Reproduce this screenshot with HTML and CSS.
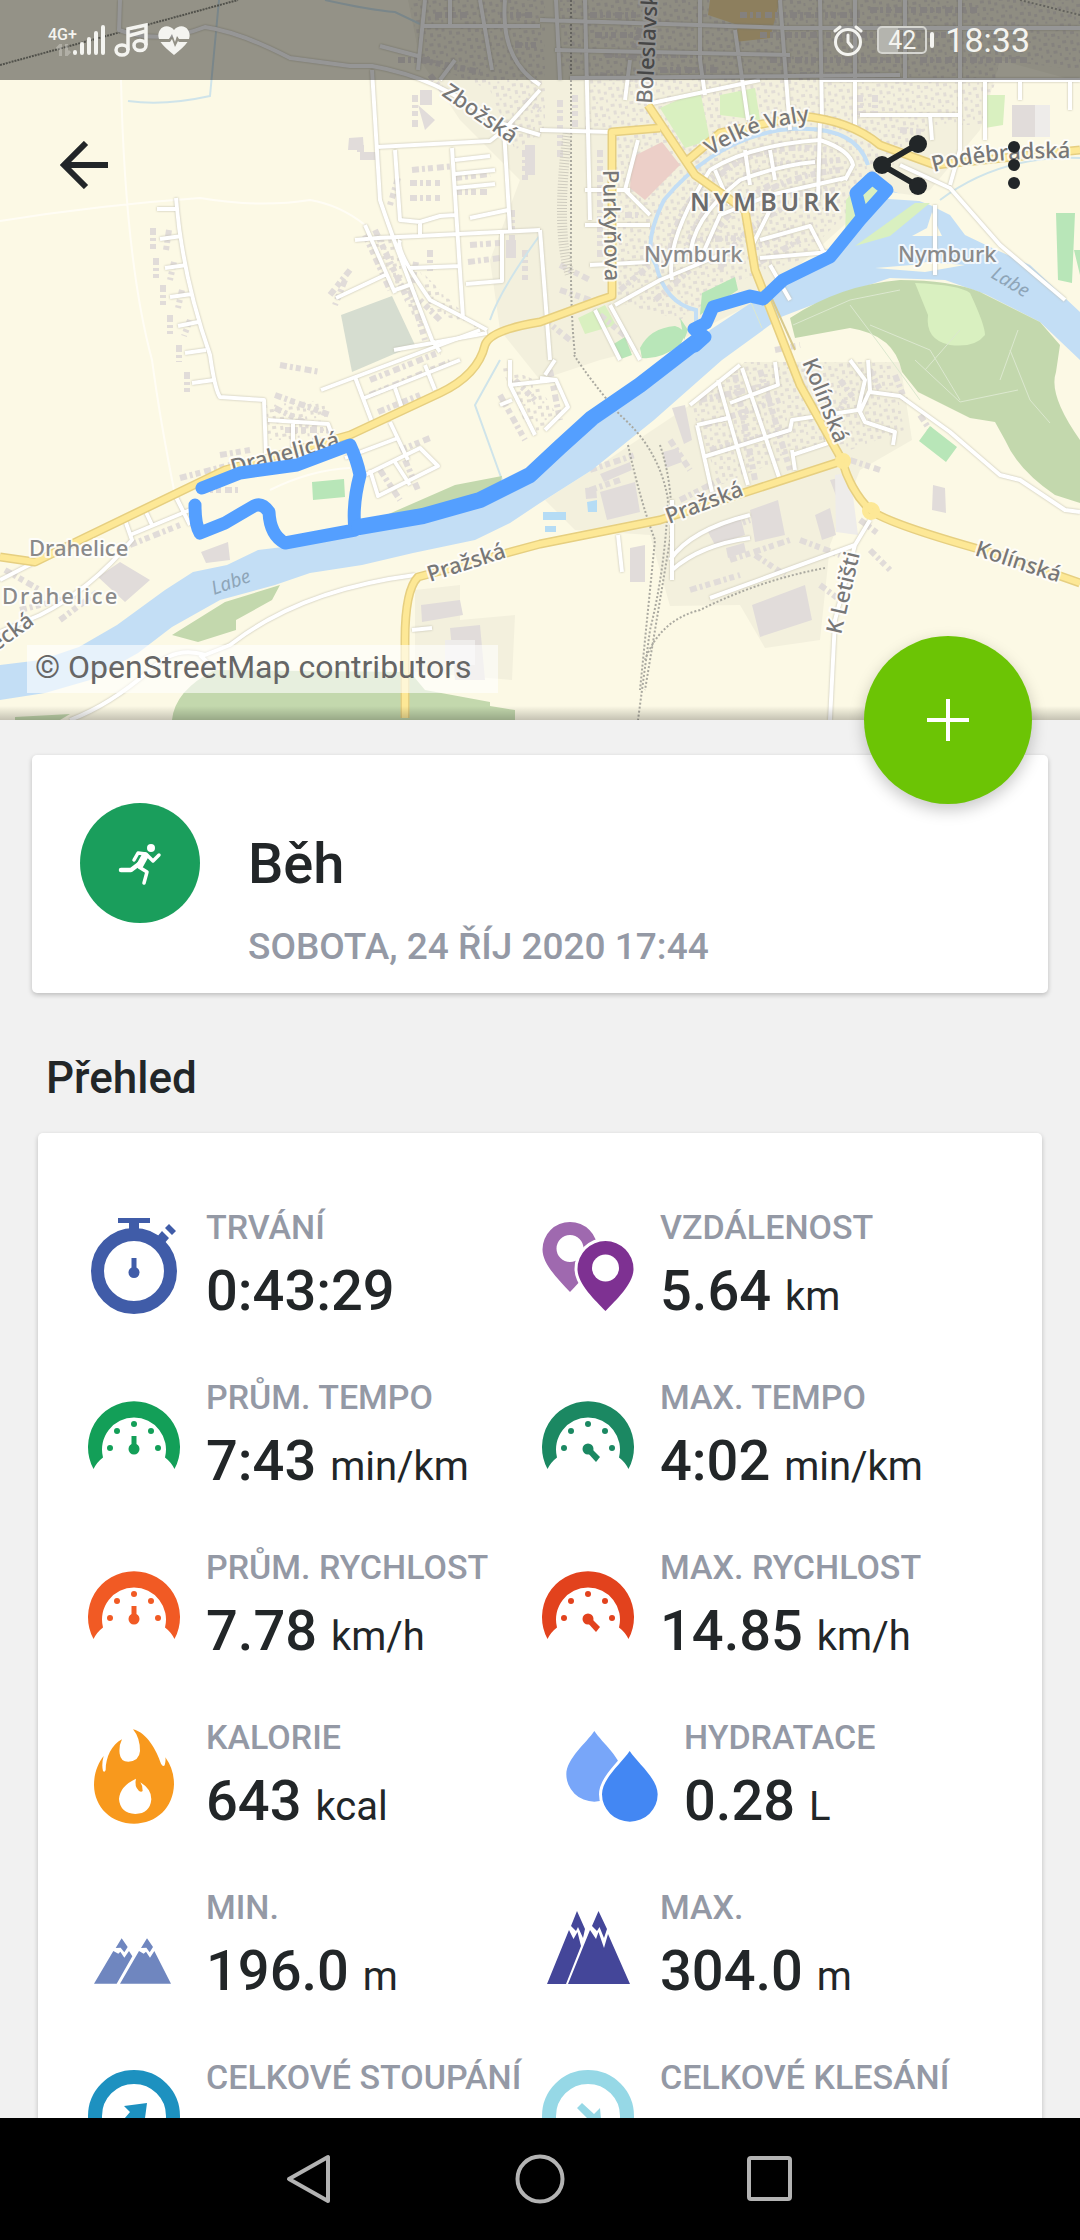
FILE: index.html
```html
<!DOCTYPE html>
<html lang="cs">
<head>
    <meta charset="UTF-8">
    <meta name="viewport" content="width=device-width, initial-scale=1.0">
    <title>Běh</title>
    <link rel="stylesheet" href="styles.css">
</head>
<body>
    <!-- shared icons -->
    <svg class="sprite" aria-hidden="true">
        <symbol id="gauge" viewBox="0 0 96 96">
            <path d="M7.500 81A46 46 0 1 1 88.500 81Q85 74 79 69.500A32 32 0 1 0 17 69.500Q11 74 7.500 81Z"/>
            <circle cx="24" cy="60" r="3"/><circle cx="31" cy="43" r="3"/><circle cx="48" cy="36" r="3"/>
            <circle cx="65" cy="43" r="3"/><circle cx="72" cy="60" r="3"/><circle cx="48" cy="61" r="5.500"/>
        </symbol>
    </svg>

    <main class="screen">
        <section class="map">
            <svg class="map-canvas" viewBox="0 0 1080 720" preserveAspectRatio="xMidYMid slice" role="img" aria-label="Mapa trasy">
                <defs>
                    <pattern id="specks" width="19" height="17" patternUnits="userSpaceOnUse" patternTransform="rotate(-8)">
                        <path fill="#e2ddd6" d="M1 1H5V4H1ZM9 2H12V6H9ZM15 5H18V8H15ZM3 8H6V12H3ZM10 10H14V13H10ZM6 14H8V16H6ZM16 13H18V16H16Z"/>
                    </pattern>
                </defs>
                <rect class="land" width="1080" height="720"/>

                <!-- built-up areas -->
                <path class="urban" d="M408 0H1080V82L1000 60 980 130 930 190 850 220 760 300 680 340 600 360 540 380 500 330 490 260 520 180 460 120 420 60Z"/>
                <path class="urban" d="M690 405L745 362 900 362 912 440 860 470 830 545 820 640 765 648 740 605 670 606 650 535 575 530 545 500 600 465Z"/>
                <path class="urban" d="M415 590L460 585V620L515 615 512 680 415 672Z"/>
                <path fill="url(#specks)" d="M410 0H1080V70L1000 60 985 125H930L870 190 800 260 740 280 680 320 610 300V130H585V70H560V0H545V130L515 150 490 90 420 60ZM372 240L395 235 430 330 415 320ZM420 270L450 300 480 330 430 310ZM690 405L745 362H890L905 430 850 450 830 440 720 485ZM265 405L325 400 330 440H268ZM500 365L535 380 560 420 530 435Z"/>
                <path class="park" d="M660 108L700 90 710 140 685 148ZM720 95L755 88 760 120 720 115ZM985 95L1005 95 1003 125 985 128Z"/>
                <path class="park" d="M578 318L605 305 616 325 585 334ZM846 200L870 172 880 195 850 226 845 240Z"/>
                <path class="hospital" d="M632 157L662 142 680 165 645 200 630 188Z"/>
                <path class="school" d="M710 0H780L770 38 735 42 738 25 708 15Z"/>
                <path class="site" d="M341 315L392 296 415 345 352 372Z"/>

                <!-- buildings -->
                <g class="houses">
                    <path d="M153 228V250M156 258V278M163 285V305M170 315V334M179 345V362M187 372V392M169 230L166 250M174 262L170 280M182 290L178 308M190 320L184 336"/>
                    <path d="M365 235L390 290M375 230L408 300M410 290L425 340M398 178L390 205M412 170L455 166M410 183H440M410 198H440M455 178L490 174M455 192H490M470 245L500 243M468 262L500 258M416 262L412 285M430 250V275M440 320L420 300M350 270L330 295M345 280L335 305"/>
                    <path d="M420 60L480 72M430 75L450 100M415 95V130M525 150V180M512 210V240M525 250V280M398 60H430M435 15H470M500 15H535M515 45H540M525 100L540 110"/>
                    <path d="M275 395L330 415M275 408L320 430M285 430H330M220 455L250 450M180 478L230 465M280 365L320 372M370 380L440 352M370 395L450 362M378 412L420 395M400 450L430 438M380 470L400 500M405 460L418 490M500 395L525 440M515 380L535 400"/>
                    <path d="M5 570L40 590M20 610L80 595M60 620L100 590M130 545L180 525M200 490H240"/>
                    <path d="M590 15H640M595 35H650M605 55H700M660 70H720M740 15H860M760 35H900M770 60H900M800 75H880M870 10H980M900 35H1000M920 60H1030M640 28L630 60"/>
                    <path d="M860 95V115M875 95V115M900 130L925 132M560 100V160M575 95V130M600 150V260M625 215H640M600 75L640 80"/>
                    <path d="M670 250Q680 190 740 160M685 255Q700 195 760 170M700 262Q715 215 770 185M720 270Q735 230 790 205M720 175Q760 140 830 150M750 200Q790 175 840 170M750 250L790 230M760 262L800 240M690 240L740 238M790 195L835 190M770 165L840 160"/>
                    <path d="M560 265L590 280M560 290L590 300M545 320L570 340M620 290L650 265M655 300L690 270M600 315L630 340M550 370L560 420M775 350L800 345"/>
                    <path d="M700 400L770 385M705 425L780 400M710 450L790 430M735 375L755 480M760 370L790 470M800 380L820 420M825 440L845 400M840 380L855 400M870 370L880 390M895 375L905 400M850 460L880 470M920 415L930 430"/>
                    <path d="M590 470L635 455M590 490L620 480M670 440L690 470M680 500L720 480M710 535L750 520M730 560L790 540M755 555L785 575M800 540L840 555M860 520L880 535M870 550L890 570M690 590L740 575M820 585L840 600"/>
                </g>
                <g class="buildings">
                    <path d="M600 492L635 482 640 512 607 520ZM672 408L685 405 692 440 684 444ZM707 530L740 515 745 535 715 545ZM750 510L778 500 785 535 755 542ZM752 605L805 585 812 620 760 637ZM815 515L830 508 836 535 822 540Z"/>
                    <path d="M630 548L645 545V582H630ZM830 480L842 477 848 497 838 501ZM933 485L945 488 946 513 932 510ZM201 552L228 542 230 560 206 563ZM98 577L120 562 150 580 125 602ZM421 605L460 600 463 615 422 622ZM450 628L480 625 485 680 455 680ZM1012 105L1035 105V137H1012ZM420 90H432V105H420ZM418 105L425 130 435 120ZM525 145H535V175H525ZM506 240H516V258H506Z"/>
                    <path d="M349 138L363 137 364 152H377V160H360V150H348ZM357 145H364V152H357ZM585 488L596 487 597 498 586 499ZM663 452L678 448 682 462 666 468ZM600 474L630 462 632 470 604 482ZM726 548L744 543 746 552 728 558Z"/>
                </g>
                <path class="plot" d="M835 475L850 472 858 535 836 532ZM1035 105H1050V137H1035ZM445 640H475V665H445Z"/>

                <!-- water -->
                <path class="stream" d="M128 101Q165 106 210 96L219 0M325 0Q370 10 395 12L420 24M540 235Q500 290 490 320M500 360L475 405 502 480M1080 158Q1000 155 940 200M985 395Q1040 430 1060 440"/>
                <path class="moat" d="M696 325V310Q665 303 656 265Q642 245 664 200Q712 142 780 130Q855 122 868 165"/>
                <path class="water" d="M0 665L41 660 79 647 117 625 165 590 193 572 227 565 258 550 300 545 355 530 415 518 492 492 540 465 575 440 685 360 710 330 760 297 830 255 865 215 890 190 930 205 950 215 965 235 990 247 1030 265 1065 298 1080 312V360L1040 322 985 294 945 280 890 278 833 297 781 317 722 360 654 420 592 470 540 503 510 523 475 540 413 553 362 565 310 573 275 585 220 600 172 627 138 653 90 680 45 693 0 700Z"/>
                <path class="pool" d="M587 502L597 500V512H588ZM543 512H566V520H543ZM545 526H556V532H545Z"/>
                <path class="land" d="M875 268L912 265 926 262 965 265 925 272ZM912 236L927 228 932 212 938 228 942 236Z"/>
                <path class="park" d="M855 246L915 203 930 203 890 236Z"/>
                <path class="land" d="M888 199L920 201 925 197 890 192Z"/>

                <!-- woods and pitches -->
                <path class="wood" d="M790 318Q840 285 900 280Q950 280 980 292L1040 322 1060 345 1056 372Q1048 395 1080 440V503L1055 495Q1018 470 1005 440L995 422 970 418 918 392 902 372Q895 335 850 328L795 338Z"/>
                <path class="park" d="M915 283Q960 285 970 293Q985 325 985 335Q975 348 950 345Q925 340 928 315Z"/>
                <path class="wood" d="M375 520L455 485 502 476 500 487 440 505ZM172 635L225 602 280 585 272 600 236 620V630L198 642Z"/>
                <path class="wood" d="M172 720Q175 690 215 670L410 672 425 690 490 702V706L515 710V720ZM15 717L70 714 60 720H15Z"/>
                <path class="pitch" d="M312 482L344 479 345 497 313 500ZM919 441L930 426 957 447 946 462ZM1056 213H1075L1072 283 1058 280ZM1074 250H1080V275ZM640 348Q650 328 675 326Q690 330 680 345Q660 360 642 358ZM702 293L735 277 738 290 715 305 700 315ZM612 345L625 337 632 355 618 360ZM680 318L688 330 684 340Z"/>
                <path class="path" d="M793 325L850 300 900 290M850 305L880 345 920 400M870 325L930 350 960 400M915 360L960 402 1018 390M1018 330L1000 380M1010 350L1030 400 1050 423M925 370L960 330M750 300L762 328"/>

                <!-- railways -->
                <path class="rail" d="M0 65L238 0"/>
                <path class="rail thin" d="M571 0V230Q570 310 575 355M574 355Q590 380 620 415Q660 450 668 500Q665 570 650 630L638 720M660 445Q675 490 670 540L645 690M628 445Q640 500 655 540L640 690M825 568Q760 580 700 610Q660 620 645 660M1020 0L1080 15"/>
                <path class="yard" d="M568 130Q555 230 570 275"/>

                <!-- side roads -->
                <path class="track" d="M0 221Q100 205 200 198Q260 208 310 200Q340 205 365 225M121 80Q125 260 152 360Q160 420 175 495M270 490Q310 470 350 468"/>
                <g class="street">
                    <path d="M120 0L119 30Q160 45 205 27Q240 32 290 58L350 66 372 66Q440 78 490 120L540 135"/>
                    <path d="M372 70L380 200Q395 245 432 340L440 352M377 147L490 141 504 130 540 90M504 130L510 230M355 240L378 238 540 230M452 148L463 318M395 150L400 220 420 222 440 216 455 215M410 268L460 266M466 284L502 281 502 233M420 222V238M336 298L385 275M400 240Q395 250 430 300Q465 318 487 330M395 290L412 284M365 225L395 293M455 160L490 156M455 174L495 170M455 188L495 184M470 218L508 210M394 350L487 333"/>
                    <path d="M425 0L418 70M422 26H540M450 0V25M480 0L492 70M505 0Q500 60 540 85M380 46L418 56M455 60L440 80"/>
                    <path d="M176 198Q182 275 210 355Q215 390 220 397L264 400 266 455M157 209H178M160 239L182 236M165 268L187 265M170 297L192 294M178 326L198 322M185 353L206 350M192 383L214 380M268 420L328 424 334 440M293 422V450"/>
                    <path d="M321 390L480 330M355 377L372 422M362 399L460 360M395 388L402 408M425 365L435 390M390 422L408 460M345 458L398 438M365 475L420 448 438 466 378 496 370 470M395 462L410 485"/>
                    <path d="M175 495L190 525M130 535L190 510M145 510L152 525M125 520L132 540Q90 590 40 615L0 632M0 580L35 562M510 360V385L535 435M500 405L512 400M510 385L555 380"/>
                    <path d="M70 720Q110 705 150 670Q175 645 205 655L230 645Q300 590 415 575M200 655L215 670"/>
                    <path d="M556 0L560 80M585 0L590 220M630 60L625 100M540 20L790 28M555 50L790 55M570 78L900 75M700 0V60L705 95M735 30L748 120M780 0L790 130M820 0L822 120M855 0V125M905 0V78M960 0V150L950 185M790 28L1080 28M820 80H1080M652 103L760 80M860 115H960M930 115L932 140M1020 80V100M1070 80V110M985 80V140"/>
                    <path d="M540 130L610 132M585 190H630M585 225H650M590 265L650 262M650 215L625 190 638 140M672 280Q665 240 710 170Q750 145 820 140Q850 150 853 165L845 180M690 260Q690 220 740 180Q780 165 815 162M700 260L720 215 770 195 845 178M820 120L818 200M770 150L775 180M745 150L750 185M715 170L730 205M760 240L810 226 825 255M750 250L770 210M760 258L830 252M840 180L845 178"/>
                    <path d="M615 305L660 280 720 255M540 230L550 360M595 310L620 360M610 305L640 360M770 265L790 300M900 165L950 188 1000 245 1065 300M935 205V275M540 378L556 380 568 407 545 430M545 375L555 360"/>
                    <path d="M690 405L740 365M697 425L728 418M718 380L748 485M742 368L780 480M697 425L712 492M703 457L790 430 792 420 858 410 865 380 850 360M792 450L795 470M792 455L828 443 822 420M868 360L870 390 860 412 865 422 895 432 893 445M870 392L900 396 950 432 1000 475 1020 480 1065 510 1080 512M775 362L778 385 730 403"/>
                    <path d="M618 535L622 572M672 500V580M670 560Q690 530 750 515M672 570Q700 545 750 538M870 520L855 545 710 598M855 545L835 620 833 660 830 720M412 630L432 628M720 420L728 418"/>
                </g>

                <!-- main roads -->
                <g class="main-casing">
                    <path d="M0 557L35 562 80 540 225 470 350 435 440 393Q478 375 485 345Q490 330 540 322L600 300 612 296V132L660 128M648 105L695 175 745 210 755 270 800 385 842 460Q850 490 870 510Q890 525 1000 555L1080 583M688 160L720 133 800 116Q850 120 880 145L935 165 1080 150M405 718V640Q405 590 418 577L540 544 660 520 842 461"/>
                </g>
                <g class="main-road">
                    <path d="M0 557L35 562 80 540 225 470 350 435 440 393Q478 375 485 345Q490 330 540 322L600 300 612 296V132L660 128M648 105L695 175 745 210 755 270 800 385 842 460Q850 490 870 510Q890 525 1000 555L1080 583M688 160L720 133 800 116Q850 120 880 145L935 165 1080 150M405 718V640Q405 590 418 577L540 544 660 520 842 461"/>
                    <circle cx="843" cy="461" r="5"/><circle cx="871" cy="511" r="6"/>
                </g>
                <path class="bridge" d="M768 290L795 350"/>

                <!-- labels -->
                <g class="place">
                    <text transform="translate(441 95) rotate(35)">Zbožská</text>
                    <text transform="translate(652 104) rotate(-87)">Boleslavská</text>
                    <path id="valy" fill="none" d="M711 156Q750 128 812 121"/>
                    <text><textPath href="#valy">Velké Valy</textPath></text>
                    <text transform="translate(603 170) rotate(89)">Purkyňova</text>
                    <path id="podebrad" fill="none" d="M934 172Q985 157 1080 158"/>
                    <text><textPath href="#podebrad">Poděbradská</textPath></text>
                    <text transform="translate(802 362) rotate(68)">Kolínská</text>
                    <text transform="translate(669 524) rotate(-21)">Pražská</text>
                    <text transform="translate(974 555) rotate(18)">Kolínská</text>
                    <text transform="translate(841 635) rotate(-77)">K Letišti</text>
                    <text transform="translate(233 475) rotate(-15)">Drahelická</text>
                    <text transform="translate(430 582) rotate(-18)">Pražská</text>
                    <text transform="translate(-4 652) rotate(-36)">ecká</text>
                    <text class="soft" x="644" y="262">Nymburk</text>
                    <text class="soft" x="898" y="262">Nymburk</text>
                    <text class="soft" x="29" y="556">Drahelice</text>
                    <text class="soft village" x="2" y="604">Drahelice</text>
                    <text class="town" x="690" y="211">NYMBURK</text>
                    <text class="river-name" transform="translate(990 277) rotate(31)">Labe</text>
                    <text class="river-name" transform="translate(214 595) rotate(-20)">Labe</text>
                </g>

                <path class="route" d="M202 488L240 473 297 465 350 445Q357 460 360 475Q352 505 355 530L285 543Q270 535 269 512Q262 502 254 506L225 523 200 533Q195 525 195 505"/>
                <path class="route wide" d="M359 527L423 516 480 500 530 475 560 447 592 418 640 385 697 341"/>
                <path class="route" d="M695 346L705 337 694 329 706 323 713 307 750 296 763 299 783 280 830 257 860 220 887 190 872 178 856 193 862 216"/>
            </svg>

            <header class="status-bar">
                <div class="status-left">
                    <div class="network">
                        <span>4G+</span>
                        <svg width="15" height="12" viewBox="0 0 15 12"><path d="M4.500 12V1L1 5M10.500 0V11L14 7" fill="none" stroke="currentColor" stroke-width="3"/></svg>
                    </div>
                    <svg class="signal" width="34" height="32" viewBox="0 0 34 32"><path d="M3 28V29M10 20V29M17 15V29M24 9V29M31 3V29" stroke="currentColor" stroke-width="4" stroke-linecap="round"/></svg>
                    <svg class="music" width="36" height="34" viewBox="0 0 36 34"><g fill="none" stroke="currentColor" stroke-width="3.500"><ellipse cx="8" cy="27" rx="6" ry="5"/><ellipse cx="26" cy="22.500" rx="6" ry="5"/><path d="M14 27V6L32 2V22M14 13L32 8"/></g></svg>
                    <svg width="32" height="29" viewBox="0 0 32 29"><path fill="currentColor" d="M16 4C20-1 27-1 30 4C32 7 32 10 31 13H21L19 10 17 16 14 8 11 13H1C0 10 0 7 2 4C5-1 12-1 16 4ZM2.500 16H12L14 13 17 21 20 15 21 16H29.500Q26 21 16 29Q6 21 2.500 16Z"/></svg>
                </div>
                <div class="status-right">
                    <svg width="30" height="32" viewBox="0 0 30 32"><g fill="none" stroke="currentColor" stroke-width="3" stroke-linecap="round"><circle cx="15" cy="18" r="12.500"/><path d="M15 11V18L19 23M2 7L7 3M28 7L23 3"/></g></svg>
                    <span class="battery">42</span>
                    <time>18:33</time>
                </div>
            </header>

            <nav class="toolbar">
                <button class="icon-button" aria-label="Zpět">
                    <svg width="48" height="48" viewBox="0 0 48 48"><path d="M48 24H5M26 2L4 24 26 46" fill="none" stroke="currentColor" stroke-width="6"/></svg>
                </button>
                <button class="icon-button share" aria-label="Sdílet">
                    <svg width="54" height="60" viewBox="0 0 54 60"><path d="M45 9L9 30 45 51" fill="none" stroke="currentColor" stroke-width="6"/><circle cx="9" cy="30" r="9"/><circle cx="45" cy="9" r="9"/><circle cx="45" cy="51" r="9"/></svg>
                </button>
                <button class="icon-button" aria-label="Další možnosti">
                    <svg width="12" height="48" viewBox="0 0 12 48"><circle cx="6" cy="6" r="6"/><circle cx="6" cy="24" r="6"/><circle cx="6" cy="42" r="6"/></svg>
                </button>
            </nav>

            <p class="attribution">© OpenStreetMap contributors</p>
            <button class="fab" aria-label="Přidat">
                <svg width="42" height="42" viewBox="0 0 42 42"><path d="M21 0V42M0 21H42" stroke="currentColor" stroke-width="4"/></svg>
            </button>
        </section>

        <section class="card activity">
            <span class="activity-icon">
                <svg viewBox="0 0 120 120"><g fill="none" stroke="#fff" stroke-linecap="round" stroke-linejoin="round"><path stroke-width="3.500" d="M54 57L58 50 66 51 73 58 79 52M59 64L67 69 64 80"/><path stroke-width="4.500" d="M41 67H51L59 61"/><path stroke-width="7" d="M65 53L60 62"/></g><circle cx="71" cy="45" r="4" fill="#fff"/></svg>
            </span>
            <div>
                <h1>Běh</h1>
                <p class="date">SOBOTA, 24 ŘÍJ 2020 17:44</p>
            </div>
        </section>

        <h2>Přehled</h2>

        <section class="card stats">
            <div class="stat">
                <svg class="stat-icon duration" viewBox="0 0 96 96"><circle cx="48" cy="53" r="36.500" fill="none" stroke="currentColor" stroke-width="13"/><path d="M32 0H64V5H53V14H43V5H32ZM45.500 40H50.500V54H45.500ZM70 20L76 13 83 20 77 27ZM79 10L83 6 90 13 86 17Z"/><circle cx="48" cy="54.500" r="5.500"/></svg>
                <div><p class="label">TRVÁNÍ</p><p class="value">0:43:29</p></div>
            </div>
            <div class="stat">
                <svg class="stat-icon" viewBox="0 0 96 96"><path fill="#9f69af" fill-rule="evenodd" d="M30 74C20 63 2.500 47 2.500 31.500A27.500 27.500 0 0 1 57.500 31.500C57.500 47 40 63 30 74ZM30 17A13.500 13.500 0 1 0 30 44A13.500 13.500 0 1 0 30 17Z"/><path fill="#7e3192" stroke="#fff" stroke-width="6" paint-order="stroke" d="M65.500 93C55 82 37.500 66 37.500 51A28 28 0 0 1 93.500 51C93.500 66 76 82 65.500 93Z"/><circle cx="65.500" cy="50" r="13.500" fill="#fff"/></svg>
                <div><p class="label">VZDÁLENOST</p><p class="value">5.64 <small>km</small></p></div>
            </div>
            <div class="stat">
                <svg class="stat-icon pace-avg" viewBox="0 0 96 96"><use href="#gauge"/><path d="M45.500 48H50.500V60H45.500Z"/></svg>
                <div><p class="label">PRŮM. TEMPO</p><p class="value">7:43 <small>min/km</small></p></div>
            </div>
            <div class="stat">
                <svg class="stat-icon pace-max" viewBox="0 0 96 96"><use href="#gauge"/><path d="M50 59L60 69 56 74 46 63Z"/></svg>
                <div><p class="label">MAX. TEMPO</p><p class="value">4:02 <small>min/km</small></p></div>
            </div>
            <div class="stat">
                <svg class="stat-icon speed-avg" viewBox="0 0 96 96"><use href="#gauge"/><path d="M45.500 48H50.500V60H45.500Z"/></svg>
                <div><p class="label">PRŮM. RYCHLOST</p><p class="value">7.78 <small>km/h</small></p></div>
            </div>
            <div class="stat">
                <svg class="stat-icon speed-max" viewBox="0 0 96 96"><use href="#gauge"/><path d="M50 59L60 69 56 74 46 63Z"/></svg>
                <div><p class="label">MAX. RYCHLOST</p><p class="value">14.85 <small>km/h</small></p></div>
            </div>
            <div class="stat">
                <svg class="stat-icon calories" viewBox="78 591 288 288"><path d="M219 595C262 605 290 660 303 698Q309 709 314 703Q318 690 316 679Q342 715 342 760C340 830 290 878 222 878C155 878 103 830 102 762C102 725 115 695 131 675Q124 700 129 720Q134 726 137 717C137 680 155 640 186 625Q176 645 179 668Q182 692 205 692Q238 690 240 660Q240 620 219 595Z"/><path fill="#fff" d="M228 743Q222 765 237 780Q244 785 248 780Q249 765 241 754Q275 775 274 805Q270 848 226 849Q180 846 177 804Q180 765 228 743Z"/></svg>
                <div><p class="label">KALORIE</p><p class="value">643 <small>kcal</small></p></div>
            </div>
            <div class="stat hydration">
                <svg class="stat-icon" viewBox="132 591 288 288"><path fill="#78a6f9" d="M223 600C199 636 139 683 139 730A84 82 0 0 0 307 730C307 683 247 636 223 600Z"/><path fill="#4387f3" stroke="#fff" stroke-width="18" paint-order="stroke" d="M329 660C305 696 246 743 246 790A83.500 82 0 0 0 413 790C413 743 353 696 329 660Z"/></svg>
                <div><p class="label">HYDRATACE</p><p class="value">0.28 <small>L</small></p></div>
            </div>
            <div class="stat">
                <svg class="stat-icon alt-min" viewBox="78 141 288 288"><path d="M102 398L160 300 175 308 181 302 193 320 207 300 217 316 170 398ZM180 398L237 300 251 308 258 302 270 320 283 300 333 398ZM185 262L203 288 193 304 182 290 167 291ZM261 262L279 288 269 304 259 290 243 291Z"/></svg>
                <div><p class="label">MIN.</p><p class="value">196.0 <small>m</small></p></div>
            </div>
            <div class="stat">
                <svg class="stat-icon alt-max" viewBox="0 0 96 96"><path d="M7 86L29 32 33.500 41 37.500 34 41 48 26 86ZM28 86L50 32 56 41 58.500 34 64 50 68 36 90 86ZM37 13L45 31 43 40 38 29 36 33 31 28ZM58.500 13L67 31 64 40 59.500 29 57 33 52 28Z"/></svg>
                <div><p class="label">MAX.</p><p class="value">304.0 <small>m</small></p></div>
            </div>
            <div class="stat">
                <svg class="stat-icon ascent" viewBox="0 0 96 96"><circle cx="48" cy="48" r="39" fill="none" stroke="currentColor" stroke-width="14"/><path d="M61 35L38 38 44 44 33 57 39 63 51 51 58 58Z"/></svg>
                <div><p class="label">CELKOVÉ STOUPÁNÍ</p><p class="value">94.0 <small>m</small></p></div>
            </div>
            <div class="stat">
                <svg class="stat-icon descent" viewBox="0 0 96 96"><circle cx="48" cy="48" r="39" fill="none" stroke="currentColor" stroke-width="14"/><path d="M42 35L37 40 50 53 44 59 62 62 60 40 54 46Z"/></svg>
                <div><p class="label">CELKOVÉ KLESÁNÍ</p><p class="value">107.0 <small>m</small></p></div>
            </div>
        </section>
    </main>

    <nav class="system-nav">
        <button aria-label="Zpět"><svg width="50" height="50" viewBox="0 0 50 50"><path d="M4 25L43 3V47Z" stroke-linejoin="round"/></svg></button>
        <button aria-label="Domů"><svg width="50" height="50" viewBox="0 0 50 50"><circle cx="25" cy="25" r="22.500"/></svg></button>
        <button aria-label="Poslední aplikace"><svg width="50" height="50" viewBox="0 0 50 50"><rect x="4" y="4" width="41" height="41" rx="2"/></svg></button>
    </nav>
</body>
</html>
```

FILE: styles.css
```css
* { margin: 0; padding: 0; box-sizing: border-box; }

body {
    display: flex;
    flex-direction: column;
    height: 100vh;
    background: #f1f1f1;
    color: #222628;
    font-family: Roboto, sans-serif;
    overflow: hidden;
}

button {
    background: none;
    border: none;
    color: inherit;
    cursor: pointer;
}

svg { display: block; fill: currentColor; }
.sprite { position: absolute; width: 0; height: 0; }

.screen {
    flex: 1;
    min-height: 0;
    overflow: hidden;
}

/* Map */
.map {
    position: relative;
    aspect-ratio: 3 / 2;
}

.map::after {
    content: '';
    position: absolute;
    left: 0;
    right: 0;
    bottom: 0;
    height: 14px;
    background: linear-gradient(rgba(0,0,0,0), rgba(0,0,0,0.22));
}

.map-canvas { width: 100%; height: 100%; }

.land { fill: #fcf9e5; }
.urban { fill: #f3f0dd; }
.park { fill: #d9f0c0; }
.hospital { fill: #eccfc8; }
.school { fill: #f0d9a0; }
.site { fill: #d6ddd0; }
.plot { fill: #eeecea; }
.buildings { fill: #e1dcda; }
.houses { fill: none; stroke: #e1dcd9; stroke-width: 6; stroke-dasharray: 7 3 3 3 5 4; }
.water { fill: #c3def5; }
.pool { fill: #b5dcf5; }
.stream { fill: none; stroke: #cfe4ea; stroke-width: 2; }
.moat { fill: none; stroke: #c3def5; stroke-width: 4; }
.wood { fill: #c3d8ad; }
.pitch { fill: #b8e6b8; }
.path { fill: none; stroke: #dce8cf; stroke-width: 1; }
.track { fill: none; stroke: #fffdf5; stroke-width: 2; }
.rail { fill: none; stroke: #8a8a80; stroke-width: 2; stroke-dasharray: 2 1; }
.thin { stroke: #aaa9a0; stroke-dasharray: 2 2; }
.yard { fill: none; stroke: #cfccbf; stroke-width: 10; stroke-dasharray: 1 2; }

.street {
    fill: none;
    stroke: #fff;
    stroke-width: 4;
    stroke-linejoin: round;
    filter: drop-shadow(0 0 1px #bdbaac);
}

.main-casing { fill: none; stroke: #e6cf80; stroke-width: 9; stroke-linejoin: round; }
.main-road { fill: none; stroke: #fde896; stroke-width: 6; stroke-linejoin: round; }
.bridge { fill: none; stroke: #d8c98d; stroke-width: 2; }

.place {
    font: 500 22px 'Noto Sans', sans-serif;
    fill: #777;
    stroke: rgba(255,255,255,0.8);
    stroke-width: 4px;
    stroke-linejoin: round;
    paint-order: stroke;
}

.place path { stroke: none; }
.soft { fill: #8a8a8a; }
.village { letter-spacing: 2px; }
.town { font-size: 25px; font-weight: 600; letter-spacing: 4px; fill: #6c6c6c; }
.river-name { font-size: 19px; font-style: italic; font-weight: 400; fill: #8ea5b8; stroke: none; }

.route {
    fill: none;
    stroke: #549fff;
    stroke-width: 13;
    stroke-linecap: round;
    stroke-linejoin: round;
}

.wide { stroke-width: 16; }

/* Bars over the map */
.status-bar {
    position: absolute;
    top: 0;
    left: 0;
    right: 0;
    display: flex;
    justify-content: space-between;
    align-items: center;
    height: 80px;
    padding: 0 50px 0 48px;
    background: rgba(0,0,0,0.41);
    color: #f4f4f0;
}

.status-left, .status-right { display: flex; align-items: center; }
.network { width: 24px; font-size: 16px; font-weight: 500; line-height: 19px; }
.network svg { margin-left: 8px; opacity: 0.3; }
.music { margin: 0 8px; }
.status-right { gap: 14px; font-size: 34px; }

.battery {
    position: relative;
    width: 50px;
    height: 28px;
    margin-right: 4px;
    border: 2px solid #d5d5d0;
    border-radius: 5px;
    background: linear-gradient(90deg, #b4b4ae 42%, transparent 42%);
    font-size: 25px;
    line-height: 25px;
    text-align: center;
}

.battery::after {
    content: '';
    position: absolute;
    top: 4px;
    right: -9px;
    width: 4px;
    height: 16px;
    border-radius: 2px;
    background: #f4f4f0;
}

.toolbar {
    position: absolute;
    top: 80px;
    left: 0;
    right: 0;
    display: flex;
    align-items: center;
    height: 170px;
    padding: 0 60px;
}

.share { margin-left: auto; margin-right: 81px; }

.attribution {
    position: absolute;
    left: 27px;
    bottom: 27px;
    padding: 0 26px 4px 8px;
    background: rgba(255,255,255,0.6);
    color: #666;
    font-size: 32px;
    line-height: 44px;
}

.fab {
    position: absolute;
    right: 48px;
    bottom: -84px;
    z-index: 1;
    display: flex;
    align-items: center;
    justify-content: center;
    width: 168px;
    height: 168px;
    border-radius: 50%;
    background: #6cc405;
    color: #fff;
    box-shadow: 0 6px 16px rgba(0,0,0,0.22);
}

/* Cards */
.card {
    background: #fff;
    border-radius: 5px;
    box-shadow: 0 2px 5px rgba(0,0,0,0.22);
}

.activity {
    display: flex;
    gap: 48px;
    margin: 35px 32px 0;
    padding: 48px 48px 24px;
}

.activity-icon {
    width: 120px;
    height: 120px;
    border-radius: 50%;
    background: #1a9e5c;
}

h1 { font-size: 56px; font-weight: 500; line-height: 122px; }
.date { color: #9499a5; font-size: 37px; font-weight: 500; line-height: 44px; }
h2 { padding: 30px 46px 0; font-size: 44px; font-weight: 500; line-height: 110px; }

.stats {
    display: grid;
    grid-template-columns: 1fr 1fr;
    row-gap: 52px;
    margin: 0 38px;
    padding: 74px 48px;
}

.stat {
    display: flex;
    align-items: center;
    gap: 24px;
    min-width: 0;
    white-space: nowrap;
}

.hydration { padding-left: 24px; }
.stat-icon { flex: none; width: 96px; height: 96px; }
.label { margin-bottom: 10px; color: #9499a5; font-size: 34px; font-weight: 500; line-height: 40px; }
.value { font-size: 56px; font-weight: 500; line-height: 68px; }
.value small { font-size: 40px; font-weight: 400; line-height: 40px; }

.duration { color: #405ca8; }
.pace-avg { color: #139f58; }
.pace-max { color: #1b8862; }
.speed-avg { color: #f15a24; }
.speed-max { color: #e2421d; }
.calories { color: #f8991d; }
.alt-min { color: #6f86bf; }
.alt-max { color: #444699; }
.ascent { color: #1d91c0; }
.descent { color: #96d8e6; }

/* Android navigation */
.system-nav {
    display: flex;
    justify-content: center;
    align-items: center;
    gap: 180px;
    height: 122px;
    background: #000;
    color: #b3b3b3;
}

.system-nav svg { fill: none; stroke: currentColor; stroke-width: 4; }
```
